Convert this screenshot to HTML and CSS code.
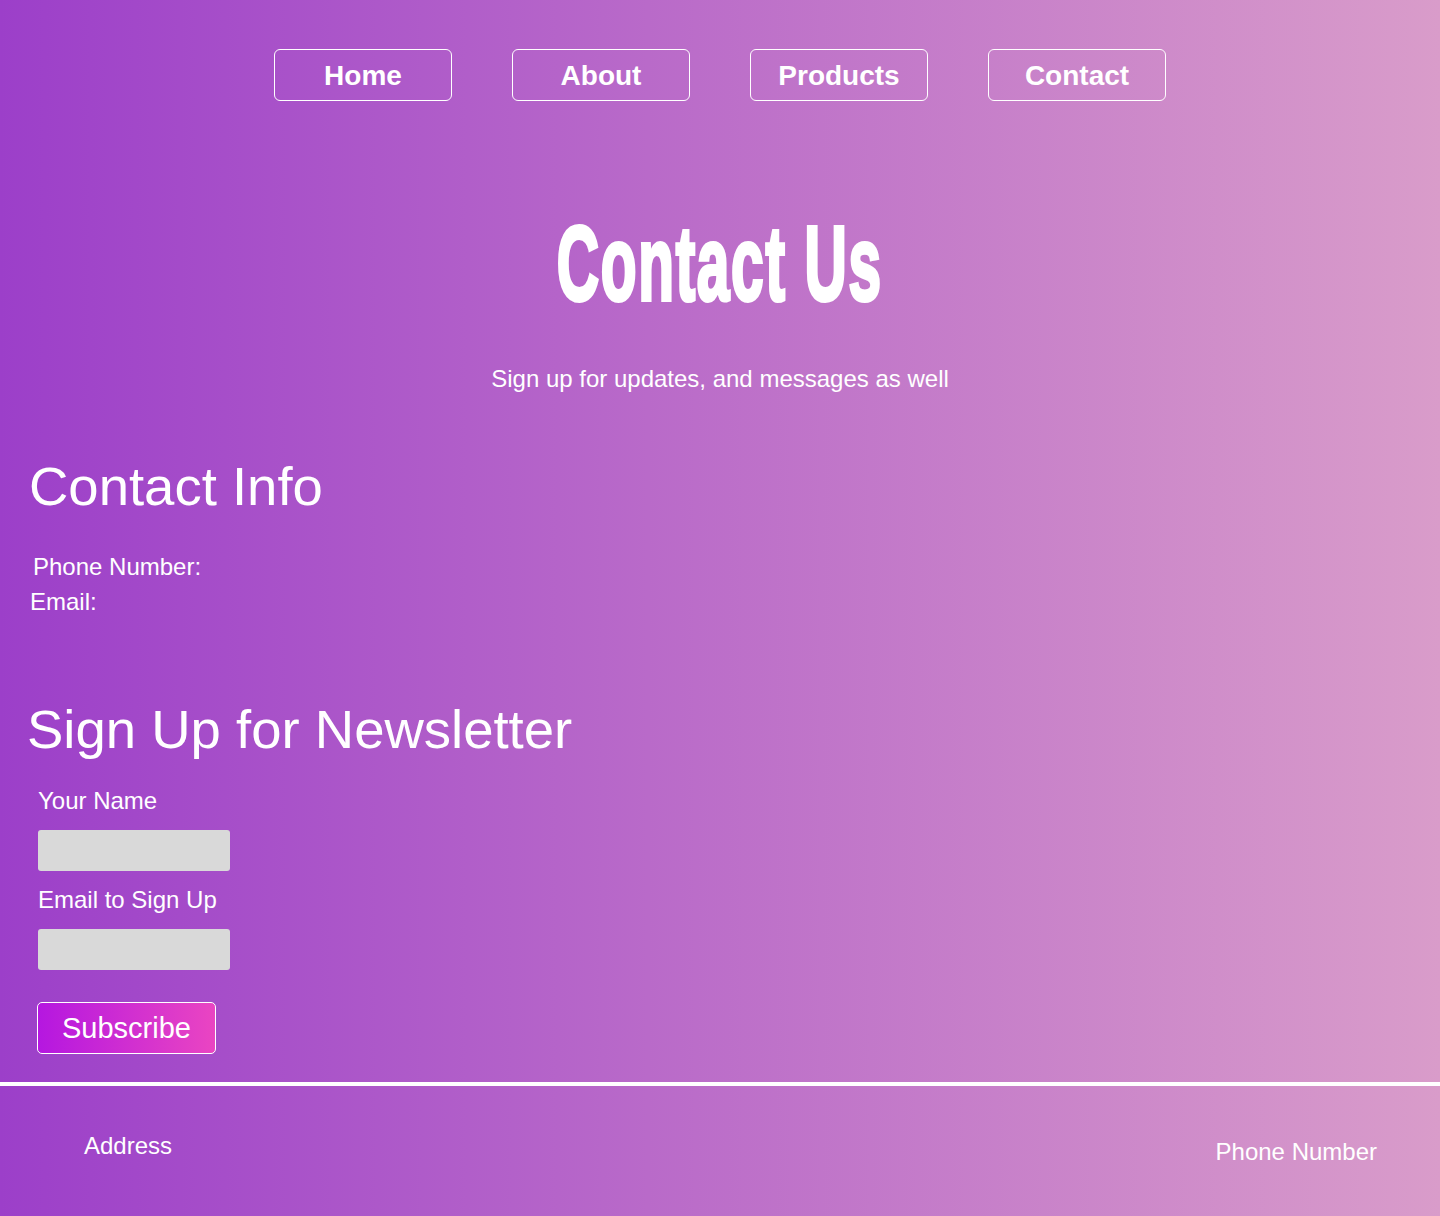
FILE: index.html
```html
<!DOCTYPE html>
<html lang="en">
<head>
<meta charset="utf-8">
<title>Contact Us</title>
<link rel="stylesheet" href="styles.css">
</head>
<body>
<div class="page">
  <nav class="nav">
    <a class="nav-btn" href="#">Home</a>
    <a class="nav-btn" href="#">About</a>
    <a class="nav-btn" href="#">Products</a>
    <a class="nav-btn" href="#">Contact</a>
  </nav>

  <header class="hero">
    <h1 class="hero-title"><span class="hero-title-text">Contact Us</span></h1>
    <p class="hero-sub">Sign up for updates, and messages as well</p>
  </header>

  <section class="info">
    <h2 class="section-title">Contact Info</h2>
    <p class="info-line info-phone">Phone Number:</p>
    <p class="info-line info-email">Email:</p>
  </section>

  <section class="newsletter">
    <h2 class="section-title newsletter-title">Sign Up for Newsletter</h2>
    <form class="form">
      <label class="form-label" for="name">Your Name</label>
      <input class="form-input" id="name" type="text">
      <label class="form-label" for="email">Email to Sign Up</label>
      <input class="form-input" id="email" type="email">
      <button class="subscribe" type="button">Subscribe</button>
    </form>
  </section>

  <footer class="footer">
    <span class="footer-address">Address</span>
    <span class="footer-phone">Phone Number</span>
  </footer>
</div>
</body>
</html>
```

FILE: styles.css
```css
html, body {
  margin: 0;
  padding: 0;
}

body {
  background: linear-gradient(to right, #9c3fc9 0%, #b96ac9 45%, #d99cca 100%);
  color: #ffffff;
  font-family: "Liberation Sans", Arial, sans-serif;
  min-height: 1216px;
}

.page {
  display: flex;
  flex-direction: column;
  min-height: 1216px;
}

.nav {
  display: flex;
  justify-content: center;
  gap: 60px;
  padding-top: 49px;
}

.nav-btn {
  box-sizing: border-box;
  width: 178px;
  height: 52px;
  border: 1px solid #ffffff;
  border-radius: 6px;
  display: flex;
  align-items: center;
  justify-content: center;
  color: #ffffff;
  text-decoration: none;
  font-weight: 700;
  font-size: 28px;
  padding-top: 2px;
}

.hero {
  text-align: center;
}

.hero-title {
  margin: 109px 0 0;
  font-family: "Liberation Sans", Arial, sans-serif;
  font-weight: 700;
  font-size: 106px;
  line-height: 106px;
}

.hero-title-text {
  display: inline-block;
  letter-spacing: 3px;
  -webkit-text-stroke: 4px #ffffff;
  transform: scaleX(0.553);
}

.hero-sub {
  margin: 49px 0 0;
  font-size: 24px;
  line-height: 28px;
}

.info {
  padding-top: 63px;
}

.section-title {
  margin: 0 0 0 29px;
  font-weight: 400;
  font-size: 54.5px;
  line-height: 62px;
}

.info-line {
  margin: 0;
  font-size: 24px;
  line-height: 35px;
}

.info-phone {
  margin: 31px 0 0 33px;
}

.info-email {
  margin-left: 30px;
}

.newsletter {
  padding-top: 80px;
}

.newsletter-title {
  margin-left: 27px;
}

.form {
  display: flex;
  flex-direction: column;
  align-items: flex-start;
  padding: 26px 0 0 38px;
}

.form-label {
  font-size: 24px;
  line-height: 28px;
}

.form-input {
  box-sizing: border-box;
  width: 192px;
  height: 41px;
  margin: 15px 0;
  border: none;
  border-radius: 3px;
  background: #d9d9d9;
}

.form-input:last-of-type {
  margin-bottom: 32px;
}

.subscribe {
  box-sizing: border-box;
  width: 179px;
  height: 52px;
  margin-left: -1px;
  border: 1px solid #ffffff;
  border-radius: 5px;
  background: linear-gradient(to right, #b517e0, #ea45c2);
  color: #ffffff;
  font-family: "Liberation Sans", Arial, sans-serif;
  font-size: 29px;
  padding: 0;
}

.footer {
  margin-top: 28px;
  border-top: 4px solid #ffffff;
  flex: 1;
  display: flex;
  justify-content: space-between;
  align-items: flex-start;
  padding: 0 63px 0 84px;
  font-size: 24px;
  line-height: 28px;
}

.footer-address {
  margin-top: 46px;
}

.footer-phone {
  margin-top: 52px;
}
```
